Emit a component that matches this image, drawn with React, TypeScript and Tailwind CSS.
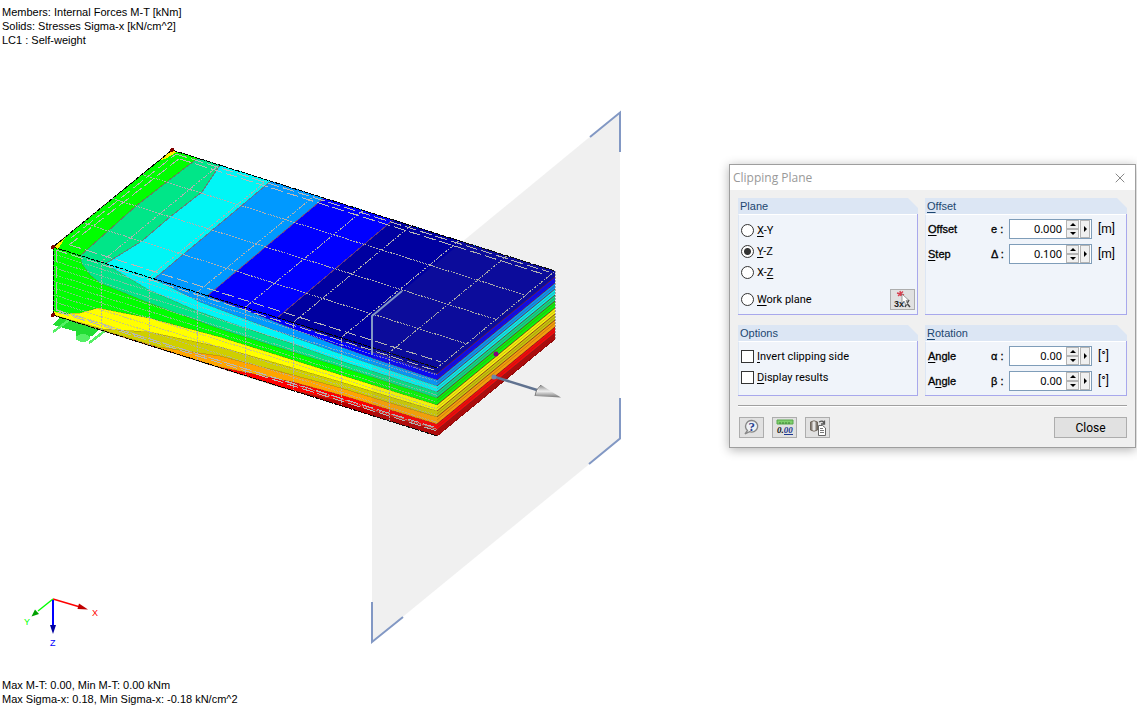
import React, { useId, useState } from 'react';
import { X } from 'lucide-react';

type Point = [number, number];

// Corners of the beam, front-left edge first
const LENGTH: Point = [384, 121];
const DEPTH: Point = [118, -97];
const HEIGHT = 68;
const ORIGIN: Point = [53, 247];

const toPoints = (points: Point[]) => points.map((p) => p.join(',')).join(' ');

const topPoint = (u: number, v: number): Point => [
  ORIGIN[0] + LENGTH[0] * u + DEPTH[0] * v,
  ORIGIN[1] + LENGTH[1] * u + DEPTH[1] * v,
];

// Upper limit of each stress band on the front face; the side face continues it
const SIDE_BANDS: { color: string; line: Point[] }[] = [
  { color: '#0000ff', line: [[277, 317], [341, 341], [437, 374]] },
  { color: '#0099ff', line: [[207, 296], [245, 310], [293, 329], [341, 347], [372, 358], [437, 380]] },
  { color: '#00f6f6', line: [[154, 279], [200, 302], [245, 319], [293, 337], [341, 354], [437, 386]] },
  { color: '#00e688', line: [[102, 262], [149, 290], [197, 311], [245, 328], [293, 344], [341, 361], [437, 392]] },
  { color: '#00ff00', line: [[80, 256], [82, 264], [90, 275], [100, 283], [149, 303], [220, 329], [293, 352], [341, 367], [437, 398]] },
  { color: '#ffff00', line: [[53, 311], [62, 314], [80, 313], [98, 308], [149, 318], [220, 337], [293, 360], [341, 375], [437, 405]] },
  { color: '#cfcf00', line: [[53, 315], [103, 329], [149, 332], [220, 347], [293, 368], [341, 382], [437, 411]] },
  { color: '#ffa500', line: [[53, 315], [158, 347], [220, 356], [293, 375], [341, 388], [437, 417]] },
  { color: '#ff0000', line: [[53, 315], [215, 366], [293, 382], [341, 395], [437, 424]] },
  { color: '#b80000', line: [[53, 315], [283, 388], [341, 401], [437, 430]] },
];

const TOP_BANDS: { color: string; line: Point[] }[] = [
  { color: '#00ff00', line: [[172, 150], [53, 247]] },
  { color: '#00e688', line: [[198, 158], [168, 181], [136, 206], [80, 256]] },
  { color: '#00f6f6', line: [[220, 165], [202, 192], [170, 217], [142, 241], [105, 264]] },
  { color: '#0099ff', line: [[271, 181], [154, 279]] },
  { color: '#0000ff', line: [[324, 198], [207, 296]] },
  { color: '#0000a0', line: [[393, 220], [277, 318]] },
];

const MESH = '#b0b0b0';

function Line({ from, to, ...rest }: { from: Point; to: Point } & React.SVGProps<SVGLineElement>) {
  return <line x1={from[0]} y1={from[1]} x2={to[0]} y2={to[1]} {...rest} />;
}

/**
 * Beam with stress bands, mesh and supports
 */
function Beam() {
  const back = topPoint(1, 1);
  const front = topPoint(1, 0);

  return (
    <g shapeRendering="crispEdges">
      {/* Support under the left end */}
      <g fill="#22dd33">
        <path d="M60 317 L98 330 L92 336 L53 325 Z" />
        <path d="M53 332 L69 320" stroke="#55f065" strokeWidth="2.5" />
        <path d="M89 343 L106 330" stroke="#55f065" strokeWidth="2.5" />
        <path d="M76 322 H90 V338 H76 Z" />
        <ellipse cx="83" cy="338" rx="7" ry="4" fill="#55f065" />
      </g>

      {/* Front and end faces */}
      <polygon points={toPoints([[53, 247], front, back, [555, 339], [437, 436], [53, 315]])} fill="#0000a0" />
      {SIDE_BANDS.map(({ color, line }) => {
        const end: Point = [555, line[line.length - 1][1] - 97];
        return (
          <g key={color}>
            <polygon
              points={toPoints([[53, line[0][1] >= 311 && line[0][0] === 53 ? line[0][1] : 247], ...line, end, [555, 339], [437, 436], [53, 315]])}
              fill={color}
            />
            <polyline points={toPoints(line)} fill="none" stroke="#806030" strokeOpacity="0.35" />
            <Line from={line[line.length - 1]} to={end} stroke="#801818" strokeOpacity="0.8" shapeRendering="auto" />
          </g>
        );
      })}

      {/* Top face */}
      {TOP_BANDS.map(({ color, line }) => (
        <g key={color}>
          <polygon points={toPoints([...line, front, back])} fill={color} />
          <polyline points={toPoints(line)} fill="none" stroke="#905060" strokeOpacity="0.7" />
        </g>
      ))}
      <polygon points="172,150 177,152 165,159 160,160" fill="#ffee00" />
      <polygon points="53,247 65,238 60,246 58,249" fill="#ffee00" />

      {/* Mesh */}
      <g stroke={MESH} strokeWidth="1" strokeDasharray="2 1">
        {[1, 2, 3, 4, 5, 6, 7].map((i) => (
          <g key={i}>
            <Line from={topPoint(i / 8, 0)} to={topPoint(i / 8, 1)} />
            <Line
              from={topPoint(i / 8, 0)}
              to={[topPoint(i / 8, 0)[0], topPoint(i / 8, 0)[1] + HEIGHT]}
            />
          </g>
        ))}
        {[1, 2, 3].map((i) => (
          <Line key={i} from={topPoint(0, i / 4)} to={topPoint(1, i / 4)} />
        ))}
      </g>
      <g stroke={MESH} strokeDasharray="2 1" strokeOpacity="0.7">
        {[1, 2, 3, 4, 5, 6, 7, 8, 9].map((i) => (
          <Line key={i} from={[53, 247 + i * 6.8]} to={[437, 368 + i * 6.8]} />
        ))}
      </g>
      <g stroke="#701414" strokeOpacity="0.25" shapeRendering="auto">
        {[3, 9, 15, 21, 27, 34, 40, 46, 53, 59].map((i) => (
          <Line key={i} from={[437, 374 + i]} to={[555, 277 + i]} />
        ))}
      </g>

      {/* Member outlines */}
      <g stroke="#b8b8b8" strokeDasharray="12 4" fill="none">
        <path d="M176 154 L549 272" />
        <path d="M180 159 L546 275" />
        <path d="M70 245 L441 362" />
        <path d="M56 250 L437 371" />
        <path d="M71 238 L176 154" />
        <path d="M69 245 L180 158" />
        <path d="M56 250 V313" />
        <path d="M58 312 L437 431" />
        <path d="M56 310 L437 428" />
      </g>
      <path d="M437 368 L555 271 V339" stroke={MESH} strokeDasharray="2 1" fill="none" />

      <path d="M53 315 V247 L172 150" stroke="#000" fill="none" strokeDasharray="4 1" />
      <path d="M172 150 L555 271" stroke="#000" strokeDasharray="5 1" fill="none" />
      <path d="M53 247 L437 368" stroke="#000" strokeDasharray="4 1" />
      <path d="M53 315 L437 436" stroke="#000" strokeDasharray="4 1" fill="none" />
      <path d="M437 436 L555 339" stroke="#900" fill="none" />

      <g fill="#800000">
        <circle cx="172" cy="150" r="2" />
        <circle cx="53" cy="247" r="2" />
        <circle cx="53" cy="315" r="2" />
      </g>
    </g>
  );
}

function PlaneOverlay() {
  return (
    <g>
      <polygon points="372,316 620,112 620,439 372,642" fill="#707070" fillOpacity="0.105" />
      <g stroke="#8298c4" strokeWidth="2" fill="none">
        <path d="M590 137 L620 112.500 V152" />
        <path d="M620 398 V438.500 L589 464" />
        <path d="M372 602 V642 L403 617" />
        <path d="M372 355 V316 L402 291" />
      </g>
      <circle cx="496" cy="354" r="2.500" fill="#800080" />
      <path d="M492 376 L537 390" stroke="#60728f" strokeWidth="2.500" />
      <circle cx="494" cy="377" r="2.500" fill="#6f86a8" />
      <path d="M541 385 L561 397.500 L535 396 Z" fill="url(#cone)" />
      <path d="M541 385 Q535 390 535 396" stroke="#777" fill="none" />
    </g>
  );
}

function AxisTriad() {
  return (
    <g fontFamily="Liberation Sans, Arial, sans-serif" fontSize="9">
      <path d="M53 599 L80 607" stroke="#ff0000" strokeWidth="1.500" />
      <path d="M79 603.500 L88 609.500 L77.500 609 Z" fill="#c00000" />
      <path d="M53 599 L38 611" stroke="#00ff00" strokeWidth="1.500" />
      <path d="M35 609.500 L39 614 L31.500 616.500 Z" fill="#00a000" />
      <path d="M53 600 V627" stroke="#0000ff" strokeWidth="2" />
      <path d="M50 625 H56 L53 634 Z" fill="#0000a0" />
      <text x="92" y="616" fill="#ff0000">X</text>
      <text x="24" y="625" fill="#00ff00">Y</text>
      <text x="50" y="646" fill="#0000ff">Z</text>
    </g>
  );
}

function ModelView() {
  return (
    <svg viewBox="0 47 640 631" className="block w-[640px] h-auto shrink-0" role="img" aria-label="Beam model">
      <defs>
        <linearGradient id="cone" x1="0" y1="0" x2="0" y2="1">
          <stop offset="0" stopColor="#888" />
          <stop offset="0.5" stopColor="#eee" />
          <stop offset="1" stopColor="#777" />
        </linearGradient>
      </defs>
      <Beam />
      <PlaneOverlay />
      <AxisTriad />
    </svg>
  );
}

/**
 * Label text with one underlined access key
 */
function Mnemonic({ text, at = 0, count = 1 }: { text: string; at?: number; count?: number }) {
  return (
    <span className="whitespace-pre">
      {text.slice(0, at)}
      <span className="underline underline-offset-2">{text.slice(at, at + count)}</span>
      {text.slice(at + count)}
    </span>
  );
}

function Group({ title, underlined = false, children }: { title: string; underlined?: boolean; children: React.ReactNode }) {
  const titleId = useId();

  return (
    <section
      aria-labelledby={titleId}
      className="flex flex-col min-w-0 bg-[linear-gradient(#f0f0f0_10px,#a8a8ec_10px)] pr-px pb-px"
    >
      <h2
        id={titleId}
        className="h-4 pl-0.5 bg-[#dce6f4] text-[#1c4670] font-['Liberation_Sans',Arial,sans-serif] leading-4 -mr-px [clip-path:polygon(0_0,calc(100%_-_10px)_0,100%_10px,100%_100%,0_100%)]"
      >
        {underlined ? <Mnemonic text={title} /> : title}
      </h2>
      <div className="flex-1 bg-[#f0f4fa] border-t border-t-white border-l border-l-[#dce6f4]">{children}</div>
    </section>
  );
}

function Radio({ value, current, onSelect, at = 0 }: { value: string; current: string; onSelect: (v: string) => void; at?: number }) {
  return (
    <label className="flex items-center h-[21px] gap-[3px]">
      <input
        type="radio"
        name="plane"
        checked={current === value}
        onChange={() => onSelect(value)}
        className="appearance-none w-[13px] h-[13px] rounded-full border border-[#333] bg-white checked:bg-[radial-gradient(circle,#333_3px,#fff_4px)]"
      />
      <Mnemonic text={value} at={at} />
    </label>
  );
}

function Check({ label }: { label: string }) {
  return (
    <label className="flex items-center h-[21px] gap-[3px]">
      <input
        type="checkbox"
        className="appearance-none w-[13px] h-[13px] border border-[#333] bg-white checked:bg-[#333]"
      />
      <Mnemonic text={label} />
    </label>
  );
}

interface NumberRowProps {
  id: string;
  label: string;
  symbol: string;
  unit: string;
  initial: number;
  digits: number;
  step: number;
  at?: number;
  count?: number;
}

function NumberRow({ id, label, symbol, unit, initial, digits, step, at, count }: NumberRowProps) {
  const [value, setValue] = useState(initial.toFixed(digits));
  const change = (delta: number) => setValue(((parseFloat(value) || 0) + delta).toFixed(digits));
  const arrowButton = 'flex items-center justify-center bg-[#f0f0f0] border border-[#b4b4b4]';

  return (
    <div className="flex items-center h-5">
      <label htmlFor={id} className="flex font-['Liberation_Sans',Arial,sans-serif] text-black [-webkit-text-stroke:0.3px_black]">
        <span className="w-[63px]">
          <Mnemonic text={label} at={at} count={count} />
        </span>
        <span className="w-[18px] whitespace-nowrap">{symbol} :</span>
      </label>
      <div className="flex w-[83px] h-5 bg-white border border-[#7f9db9] pr-px">
        <input
          id={id}
          type="text"
          value={value}
          onChange={(e) => setValue(e.target.value)}
          className="flex-1 min-w-0 pr-1 text-right text-[11px] font-['Noto_Sans',Tahoma,sans-serif] outline-none"
        />
        <div className="flex flex-col w-[13px] mr-px">
          <button type="button" aria-label={`Increase ${label}`} onClick={() => change(step)} className={`${arrowButton} flex-1`}>
            <svg viewBox="0 0 6 3" className="w-[6px] h-[3px]"><path d="M0 3 L3 0 L6 3 Z" /></svg>
          </button>
          <button type="button" aria-label={`Decrease ${label}`} onClick={() => change(-step)} className={`${arrowButton} flex-1`}>
            <svg viewBox="0 0 6 3" className="w-[6px] h-[3px]"><path d="M0 0 L3 3 L6 0 Z" /></svg>
          </button>
        </div>
        <button type="button" aria-label={`${label} menu`} className={`${arrowButton} w-[10px]`}>
          <svg viewBox="0 0 3 6" className="w-[3px] h-[6px]"><path d="M0 0 L3 3 L0 6 Z" /></svg>
        </button>
      </div>
      <span className="ml-1.5 text-xs">{unit}</span>
    </div>
  );
}

function IconButton({ label, children }: { label: string; children: React.ReactNode }) {
  return (
    <button
      type="button"
      aria-label={label}
      className="flex items-center justify-center w-[25px] h-[21px] bg-[#e1e1e1] border border-[#adadad]"
    >
      {children}
    </button>
  );
}

function PickIcon() {
  return (
    <svg viewBox="0 0 19 19" className="w-[19px] h-[19px]">
      <path d="M4 3 L11 5 M10 1.500 L5 6 M7 1 L8 6" stroke="#d84050" strokeWidth="1.400" />
      <text x="1" y="17" fontSize="9" fontWeight="bold" fontFamily="Liberation Sans, Arial, sans-serif" fill="#222">3x</text>
      <path d="M11 10 L17 17 M16 10 L12 17" stroke="#444" strokeWidth="1.500" />
      <path d="M9 4 L9 13 L11 11 L13 15 L14.500 14 L13 10.500 L15.500 10 Z" fill="#fff" stroke="#777" strokeWidth="0.700" />
    </svg>
  );
}

function HelpIcon() {
  return (
    <svg viewBox="0 0 17 17" className="w-[17px] h-[17px]">
      <path d="M9 1.500 A6 5.800 0 1 1 6.500 12.700 L2 15 L4.500 11.500 A6 5.800 0 0 1 9 1.500 Z" fill="#eef1f5" stroke="#888" strokeWidth="1.300" />
      <text x="5.500" y="12" fontSize="13" fontWeight="bold" fontFamily="Liberation Serif, serif" fill="#26418f">?</text>
    </svg>
  );
}

function UnitsIcon() {
  return (
    <svg viewBox="0 0 18 17" className="w-[18px] h-[17px]">
      <path d="M1 1 H17 V5 H1 Z" fill="#7fcf6c" stroke="#59a84c" />
      <path d="M4 3 V5 M7 3 V5 M10 3 V5 M13 3 V5" stroke="#3f7f38" strokeWidth="1" />
      <text x="1" y="14" fontSize="9" fontWeight="bold" fontStyle="italic" fontFamily="Liberation Serif, serif" fill="#111">
        0.<tspan fill="#1d3790">00</tspan>
      </text>
      <path d="M8 15.500 H17" stroke="#1d3790" />
    </svg>
  );
}

function SettingsIcon() {
  return (
    <svg viewBox="0 0 18 18" className="w-[18px] h-[18px]">
      <defs>
        <linearGradient id="cylinder">
          <stop offset="0" stopColor="#5c5148" />
          <stop offset="0.5" stopColor="#fff" />
          <stop offset="1" stopColor="#50483f" />
        </linearGradient>
      </defs>
      <path d="M1.500 3 Q5 0.500 8.500 3 V11 Q5 13.500 1.500 11 Z" fill="url(#cylinder)" stroke="#665c50" strokeWidth="0.800" />
      <path d="M10 3 Q14 1 15 4 M15.500 1.500 V5 H12" stroke="#555" strokeWidth="1.300" fill="none" />
      <path d="M9.500 6.500 H13.500 L16.500 9 V16.500 H9.500 Z" fill="#fff" stroke="#666" />
      <path d="M11 9.500 H14 M11 11.500 H15 M11 13.500 H15" stroke="#777" />
    </svg>
  );
}

function ClippingDialog() {
  const [plane, setPlane] = useState('Y-Z');

  return (
    <section
      role="dialog"
      aria-labelledby="dialog-title"
      className="absolute right-px top-[164px] w-[407px] bg-[#f0f0f0] border border-[#9e9e9e] shadow-[0_2px_10px_rgba(0,0,0,0.3)] text-[11px] leading-[14px] font-[Roboto,Tahoma,sans-serif]"
    >
      <header className="flex items-center justify-between h-[25px] pl-[3px] pr-[7px] bg-white">
        <h1 id="dialog-title" className="text-xs text-[#999] font-['Open_Sans','Segoe_UI',sans-serif]">
          Clipping Plane
        </h1>
        <button type="button" aria-label="Close dialog">
          <X className="w-4 h-4 text-[#888]" strokeWidth={1.5} />
        </button>
      </header>

      <div className="px-2 pt-2 pb-[9px]">
        <div className="grid grid-cols-[180px_1fr] gap-x-[7px] gap-y-2.5">
          <Group title="Plane">
            <div className="pt-[5px] pl-0.5 pr-0.5 pb-1">
              <Radio value="X-Y" current={plane} onSelect={setPlane} />
              <Radio value="Y-Z" current={plane} onSelect={setPlane} />
              <Radio value="X-Z" at={2} current={plane} onSelect={setPlane} />
              <div className="flex justify-between items-center mt-1.5">
                <Radio value="Work plane" current={plane} onSelect={setPlane} />
                <IconButton label="Pick three points"><PickIcon /></IconButton>
              </div>
            </div>
          </Group>

          <Group title="Offset" underlined>
            <div className="flex flex-col gap-[5px] pt-1 pl-0.5">
              <NumberRow id="offset" label="Offset" symbol="e" unit="[m]" initial={0} digits={3} step={0.1} at={0} />
              <NumberRow id="step" label="Step" symbol="Δ" unit="[m]" initial={0.1} digits={3} step={0.1} at={0} />
            </div>
          </Group>

          <Group title="Options">
            <div className="pt-1 pl-0.5 pb-[7px]">
              <Check label="Invert clipping side" />
              <Check label="Display results" />
            </div>
          </Group>

          <Group title="Rotation" underlined>
            <div className="flex flex-col gap-[5px] pt-1 pl-0.5">
              <NumberRow id="alpha" label="Angle" symbol="α" unit="[°]" initial={0} digits={2} step={1} at={0} />
              <NumberRow id="beta" label="Angle" symbol="β" unit="[°]" initial={0} digits={2} step={1} at={1} />
            </div>
          </Group>
        </div>

        <hr className="mt-[9px] mb-2.5 h-0.5 border-t border-t-[#a0a0a0] border-b border-b-white" />

        <footer className="flex items-center gap-2 pl-px">
          <IconButton label="Help"><HelpIcon /></IconButton>
          <IconButton label="Units"><UnitsIcon /></IconButton>
          <IconButton label="Settings"><SettingsIcon /></IconButton>
          <button type="button" className="ml-auto w-[73px] h-[21px] bg-[#e1e1e1] border border-[#adadad] text-xs leading-[14px]">
            Close
          </button>
        </footer>
      </div>
    </section>
  );
}

export default function App() {
  return (
    <main className="relative flex flex-col justify-between min-h-screen bg-white text-black text-[11px] leading-[14px] font-['Liberation_Sans',Arial,sans-serif]">
      <div className="pt-[5px] pl-0.5">
        <p>Members: Internal Forces M-T [kNm]</p>
        <p>Solids: Stresses Sigma-x [kN/cm^2]</p>
        <p>LC1 : Self-weight</p>
      </div>

      <ModelView />

      <div className="pb-[3px] pl-0.5">
        <p>Max M-T: 0.00, Min M-T: 0.00 kNm</p>
        <p>Max Sigma-x: 0.18, Min Sigma-x: -0.18 kN/cm^2</p>
      </div>

      <ClippingDialog />
    </main>
  );
}
